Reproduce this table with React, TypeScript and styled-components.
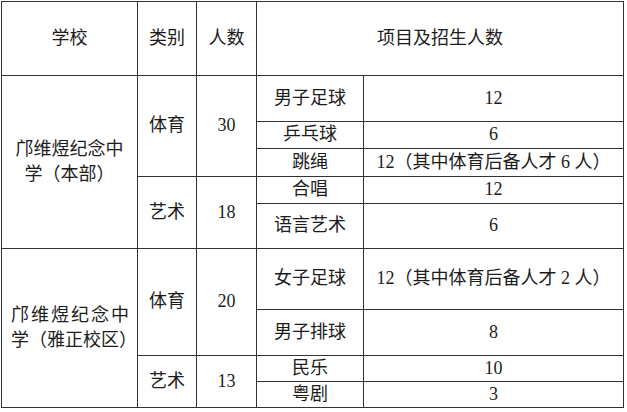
import styled, { createGlobalStyle } from 'styled-components';

const GlobalStyle = createGlobalStyle`
  html, body {
    margin: 0;
    padding: 0;
    background: #ffffff;
  }
  body {
    font-family: "Liberation Serif", "Noto Sans CJK SC", serif;
    color: #1c1c1c;
  }
`;

const Page = styled.div`
  padding: 1px 0 0 1px;
  width: 627px;
  height: 412px;
  box-sizing: border-box;
  overflow: hidden;
`;

const Table = styled.table`
  border-collapse: collapse;
  table-layout: fixed;
  width: 622px;
  font-size: 18px;
  line-height: 1.4;
`;

const Row = styled.tr<{ $h: number }>`
  height: ${(p) => p.$h}px;
`;

const Cell = styled.td`
  border: 1px solid #333333;
  padding: 0;
  text-align: center;
  vertical-align: middle;
  white-space: nowrap;
`;

const SchoolCell = styled(Cell)<{ $align?: 'left' | 'center' }>`
  text-align: ${(p) => p.$align ?? 'center'};
  padding-left: ${(p) => (p.$align === 'left' ? '9px' : '0')};
  line-height: 25px;
`;

const Spaced = styled.span`
  letter-spacing: 2px;
`;

const colWidths = [136, 59, 60, 107, 260];

type Item = { name: string; count: string };

const school1 = {
  sport: { n: '30', items: [
    { name: '男子足球', count: '12' },
    { name: '乒乓球', count: '6' },
    { name: '跳绳', count: '12（其中体育后备人才 6 人）' },
  ] as Item[] },
  art: { n: '18', items: [
    { name: '合唱', count: '12' },
    { name: '语言艺术', count: '6' },
  ] as Item[] },
};

const school2 = {
  sport: { n: '20', items: [
    { name: '女子足球', count: '12（其中体育后备人才 2 人）' },
    { name: '男子排球', count: '8' },
  ] as Item[] },
  art: { n: '13', items: [
    { name: '民乐', count: '10' },
    { name: '粤剧', count: '3' },
  ] as Item[] },
};

export default function App() {
  return (
    <Page>
      <GlobalStyle />
      <Table>
        <colgroup>
          {colWidths.map((w, i) => (
            <col key={i} style={{ width: w }} />
          ))}
        </colgroup>
        <tbody>
          <Row $h={74}>
            <Cell>学校</Cell>
            <Cell>类别</Cell>
            <Cell>人数</Cell>
            <Cell colSpan={2}>项目及招生人数</Cell>
          </Row>

          <Row $h={46}>
            <SchoolCell rowSpan={5}>
              邝维煜纪念中
              <br />
              学（本部）
            </SchoolCell>
            <Cell rowSpan={3}>体育</Cell>
            <Cell rowSpan={3}>{school1.sport.n}</Cell>
            <Cell>{school1.sport.items[0].name}</Cell>
            <Cell>{school1.sport.items[0].count}</Cell>
          </Row>
          <Row $h={27}>
            <Cell>{school1.sport.items[1].name}</Cell>
            <Cell>{school1.sport.items[1].count}</Cell>
          </Row>
          <Row $h={28}>
            <Cell>{school1.sport.items[2].name}</Cell>
            <Cell>{school1.sport.items[2].count}</Cell>
          </Row>
          <Row $h={27}>
            <Cell rowSpan={2}>艺术</Cell>
            <Cell rowSpan={2}>{school1.art.n}</Cell>
            <Cell>{school1.art.items[0].name}</Cell>
            <Cell>{school1.art.items[0].count}</Cell>
          </Row>
          <Row $h={45}>
            <Cell>{school1.art.items[1].name}</Cell>
            <Cell>{school1.art.items[1].count}</Cell>
          </Row>

          <Row $h={61}>
            <SchoolCell rowSpan={4} $align="left">
              <Spaced>邝维煜纪念中</Spaced>
              <br />
              学（雅正校区）
            </SchoolCell>
            <Cell rowSpan={2}>体育</Cell>
            <Cell rowSpan={2}>{school2.sport.n}</Cell>
            <Cell>{school2.sport.items[0].name}</Cell>
            <Cell>{school2.sport.items[0].count}</Cell>
          </Row>
          <Row $h={46}>
            <Cell>{school2.sport.items[1].name}</Cell>
            <Cell>{school2.sport.items[1].count}</Cell>
          </Row>
          <Row $h={26}>
            <Cell rowSpan={2}>艺术</Cell>
            <Cell rowSpan={2}>{school2.art.n}</Cell>
            <Cell>{school2.art.items[0].name}</Cell>
            <Cell>{school2.art.items[0].count}</Cell>
          </Row>
          <Row $h={25}>
            <Cell>{school2.art.items[1].name}</Cell>
            <Cell>{school2.art.items[1].count}</Cell>
          </Row>
        </tbody>
      </Table>
    </Page>
  );
}
